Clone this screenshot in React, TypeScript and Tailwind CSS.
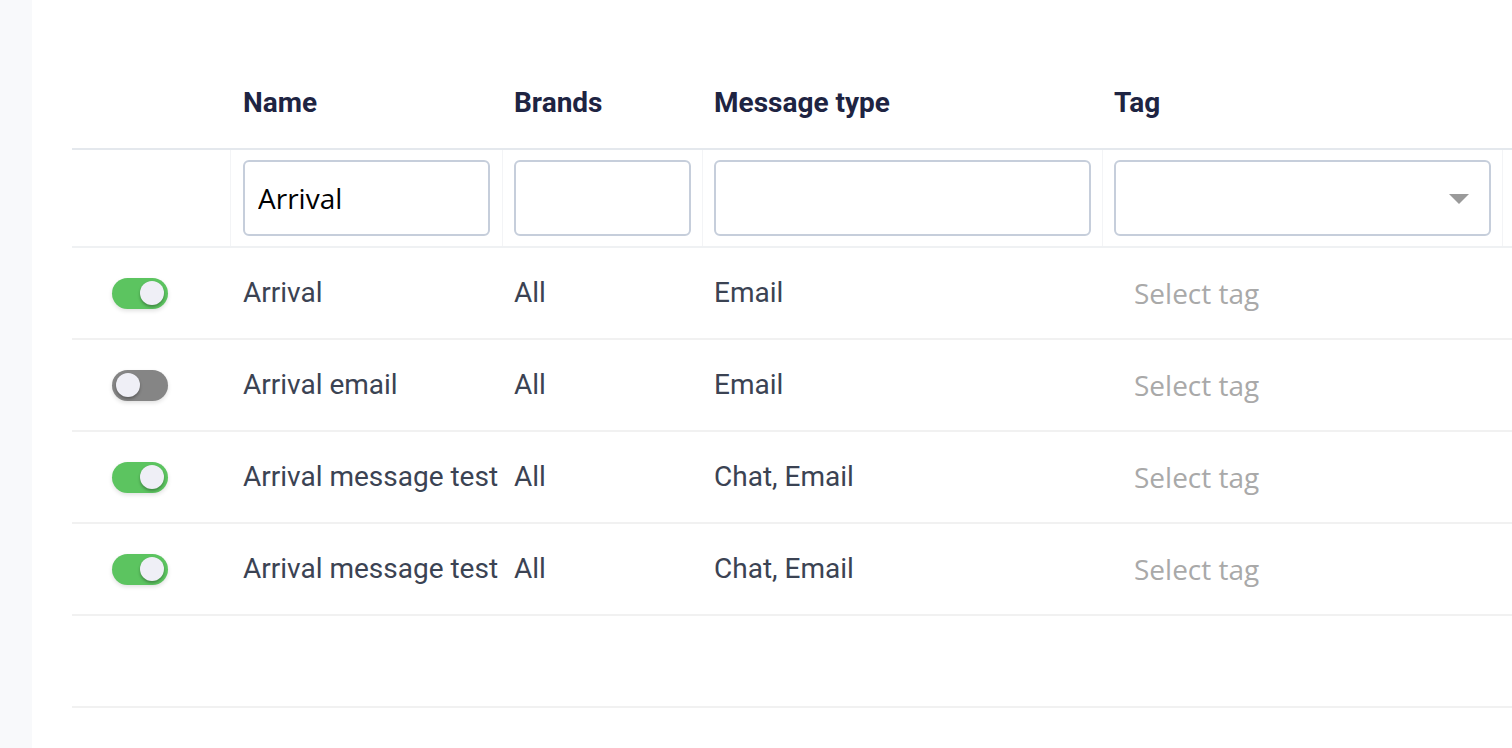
import { useState } from 'react';

interface Row {
  id: number;
  enabled: boolean;
  name: string;
  brands: string;
  type: string;
}

const initialRows: Row[] = [
  { id: 1, enabled: true, name: 'Arrival', brands: 'All', type: 'Email' },
  { id: 2, enabled: false, name: 'Arrival email', brands: 'All', type: 'Email' },
  { id: 3, enabled: true, name: 'Arrival message test', brands: 'All', type: 'Chat, Email' },
  { id: 4, enabled: true, name: 'Arrival message test', brands: 'All', type: 'Chat, Email' },
];

const cols = 'grid grid-cols-[159px_272px_200px_400px_400px_1fr]';

function Toggle({ on, onChange }: { on: boolean; onChange: () => void }) {
  return (
    <button
      onClick={onChange}
      className={`relative w-14 h-[31px] rounded-full shadow-[0_2px_4px_rgba(0,0,0,0.12)] ${on ? 'bg-[#5cc460]' : 'bg-[#858585]'}`}
    >
      <span
        className={`absolute top-[3.5px] w-6 h-6 rounded-full bg-[#efeff6] shadow-[0_2px_3px_rgba(0,0,0,0.3)] ${on ? 'left-[28px]' : 'left-[4px]'}`}
      />
    </button>
  );
}

export default function App() {
  const [rows, setRows] = useState(initialRows);
  const [filter, setFilter] = useState('Arrival');

  const toggle = (id: number) =>
    setRows((prev) => prev.map((r) => (r.id === id ? { ...r, enabled: !r.enabled } : r)));

  return (
    <div className="flex h-screen bg-white overflow-hidden font-['Roboto',sans-serif]">
      <aside className="w-8 shrink-0 bg-[#f8f9fb]" />

      <main className="flex-1 pl-10 pt-14 overflow-hidden">
        {/* header */}
        <div className={`${cols} h-[94px] pt-[2px] items-center border-b-2 border-[#e4e8ed] text-[28px] font-bold text-[#1e2442]`}>
          <div />
          <div className="pl-3">Name</div>
          <div className="pl-[11px]">Brands</div>
          <div className="pl-[11px]">Message type</div>
          <div className="pl-[11px]">Tag</div>
          <div />
        </div>

        {/* filters */}
        <div className={`${cols} h-[98px] border-b-2 border-[#eff1f3]`}>
          <div className="border-r border-[#f3f4f6]" />
          <div className="border-r border-[#f3f4f6] px-3 flex items-center">
            <input
              value={filter}
              onChange={(e) => setFilter(e.target.value)}
              className="w-full h-[76px] border-2 border-[#c6cedb] rounded-md px-[13px] text-[28px] text-black outline-none font-['Open_Sans',sans-serif]"
            />
          </div>
          <div className="border-r border-[#f3f4f6] px-[11px] flex items-center">
            <input className="w-full h-[76px] border-2 border-[#c6cedb] rounded-md outline-none" />
          </div>
          <div className="border-r border-[#f3f4f6] px-[11px] flex items-center">
            <input className="w-full h-[76px] border-2 border-[#c6cedb] rounded-md outline-none" />
          </div>
          <div className="border-r border-[#f3f4f6] px-[11px] flex items-center">
            <div className="relative w-full h-[76px] border-2 border-[#c6cedb] rounded-md">
              <svg className="absolute right-[20px] top-[32px]" width="20" height="10" viewBox="0 0 20 10">
                <path d="M0 0 L20 0 L10 10 Z" fill="#9a9a9a" />
              </svg>
            </div>
          </div>
          <div />
        </div>

        {/* rows */}
        {rows.map((r) => (
          <div key={r.id} className={`${cols} h-[92px] items-center border-b-2 border-[#f1f1f1] text-[28px] text-[#3b4353]`}>
            <div className="pl-10 flex items-center">
              <Toggle on={r.enabled} onChange={() => toggle(r.id)} />
            </div>
            <div className="pl-3 whitespace-nowrap">{r.name}</div>
            <div className="pl-[11px]">{r.brands}</div>
            <div className="pl-[11px]">{r.type}</div>
            <div className="pl-[31px] text-[28px] text-[#a9a9a9] font-['Open_Sans',sans-serif]">Select tag</div>
            <div />
          </div>
        ))}

        <div className="h-[92px] border-b-2 border-[#f1f1f1]" />
      </main>
    </div>
  );
}
